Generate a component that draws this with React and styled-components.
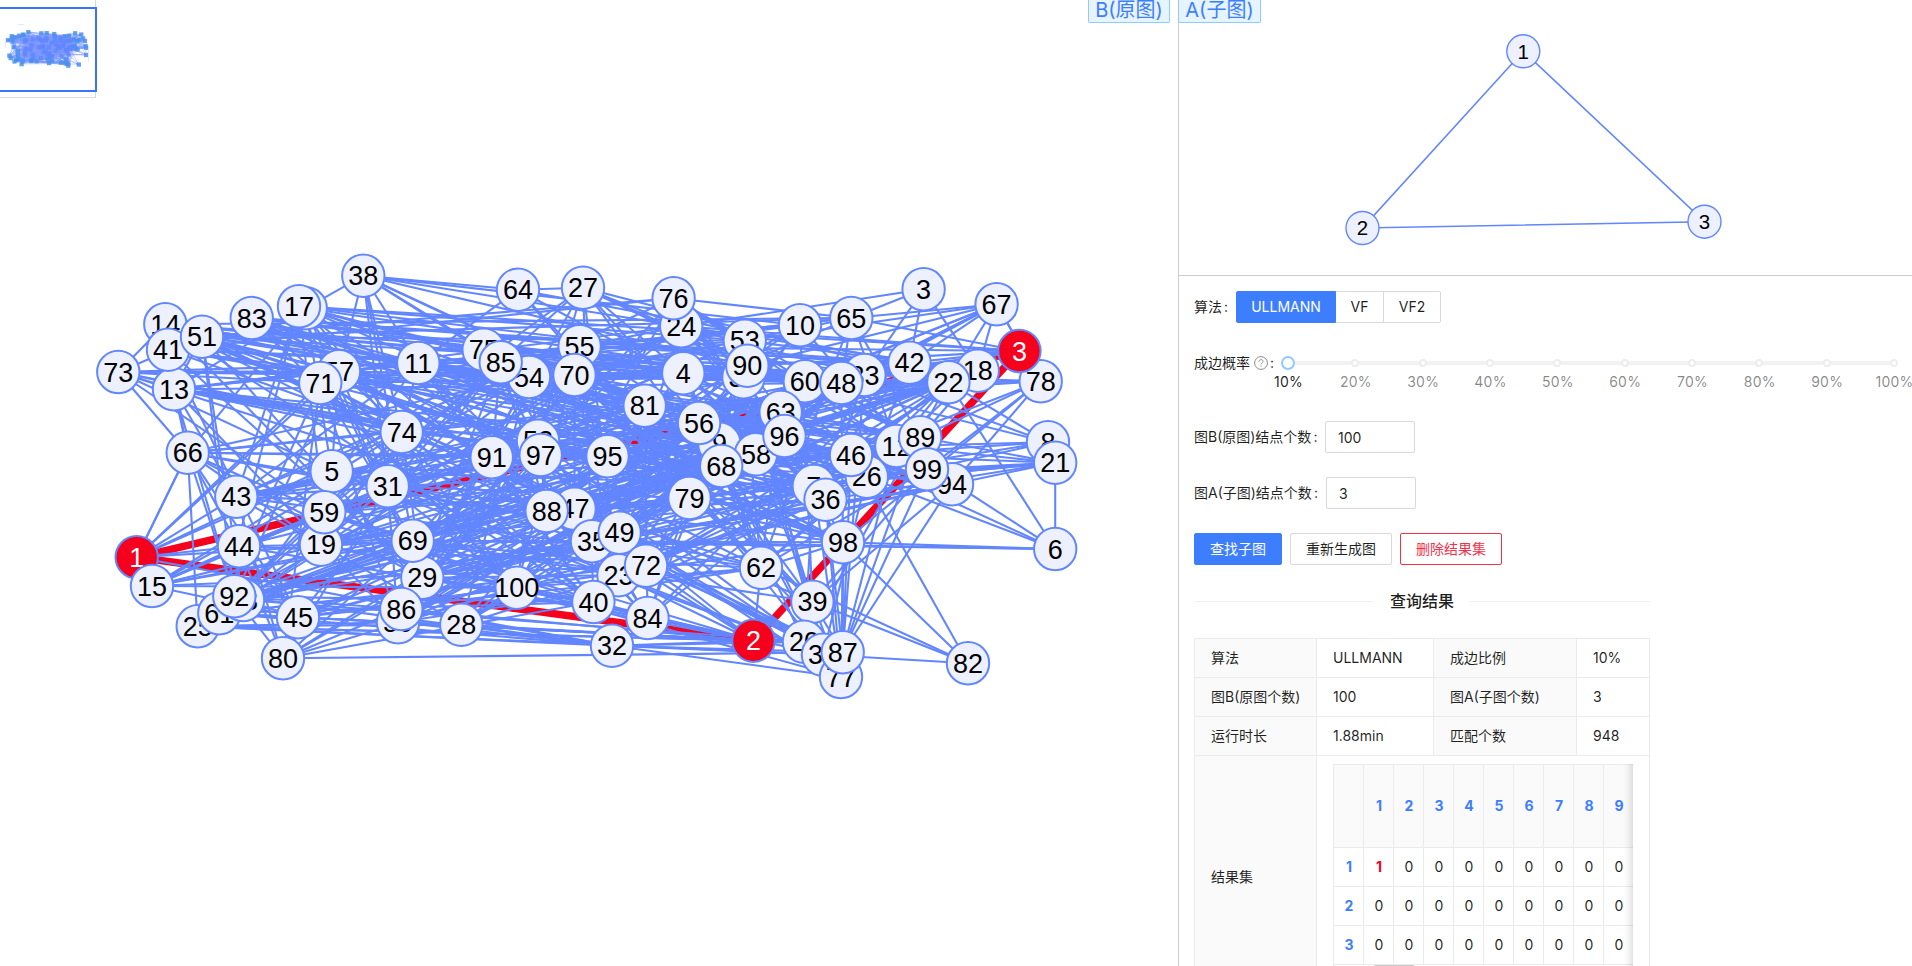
import React from 'react';
import styled, { createGlobalStyle } from 'styled-components';

const GlobalStyle = createGlobalStyle`
  * { box-sizing: border-box; }
  body {
    margin: 0;
    overflow: hidden;
    background: #fff;
    color: rgba(0, 0, 0, 0.88);
    font: 14px/22px Inter, 'Noto Sans CJK SC', sans-serif;
  }
`;

const BLUE = '#6286ff';
const PRIMARY = '#3d7eff';

/* [label, x, y], painted in order */
const NODES = [
  ['73', 118.3, 372], ['14', 165.3, 324.3], ['13', 174, 389.3], ['41', 168, 349.7], ['51', 202, 336.7],
  ['83', 251.7, 318], ['16', 305.7, 308.3], ['17', 299, 306.3], ['38', 363.3, 275.7], ['64', 518, 289.7],
  ['27', 583, 287.7], ['57', 339, 371.3], ['71', 320.3, 383], ['11', 418.3, 363], ['75', 483.7, 349.7],
  ['54', 529, 377], ['85', 500.7, 362.3], ['55', 579.6, 346.3], ['70', 574.5, 375], ['74', 401.7, 432],
  ['66', 187.7, 452.7], ['91', 491.7, 457.3], ['52', 538, 440.7], ['97', 540.7, 455], ['5', 331.7, 471.3],
  ['31', 387.7, 486.3], ['24', 681.2, 326.3], ['76', 673.6, 298.3], ['10', 800, 325.3], ['65', 851.3, 318],
  ['3', 923.6, 289.3], ['67', 996.6, 304.3], ['78', 1040.7, 381.3], ['18', 977.7, 370.7], ['42', 909.5, 362.7],
  ['22', 948.4, 382.3], ['53', 744.8, 340.7], ['30', 743.5, 377.3], ['90', 747.3, 365.7], ['4', 683.3, 373.3],
  ['33', 864.4, 375], ['60', 804.8, 381.3], ['48', 841.3, 383], ['81', 644.7, 405.7], ['9', 719.4, 443.7],
  ['56', 699.1, 423], ['63', 780.7, 412], ['58', 756, 454.3], ['96', 784.5, 436], ['68', 721.2, 466],
  ['95', 607.5, 456.3], ['12', 896.4, 446], ['89', 920.2, 437.3], ['94', 952, 484.3], ['99', 927, 469.3],
  ['8', 1048, 442.3], ['21', 1055.2, 462.7], ['26', 866.8, 476.7], ['46', 851, 455], ['7', 813.8, 486],
  ['36', 825.5, 499.7], ['79', 689.5, 498], ['47', 574.5, 508.7], ['88', 546.7, 511], ['35', 592, 541.3],
  ['49', 619.6, 532.7], ['23', 618.5, 575.3], ['72', 646, 565.7], ['62', 761, 567.7], ['98', 843, 542.3],
  ['6', 1055.2, 549], ['39', 812.4, 601.7], ['32', 612, 645.7], ['40', 593.4, 602], ['84', 647.5, 618],
  ['20', 804, 641.7], ['34', 823, 654.7], ['77', 841, 677], ['87', 842.7, 652.3], ['82', 968, 663.3],
  ['43', 236.3, 496.7], ['19', 321, 544.7], ['59', 324.3, 512.3], ['44', 239, 546.3], ['25', 197.7, 626.3],
  ['61', 219.3, 613.3], ['93', 243, 600], ['92', 234.3, 596.3], ['45', 298, 617.3], ['80', 283, 658.3],
  ['29', 422.3, 577.7], ['69', 412.7, 540.7], ['50', 398, 622.3], ['86', 401.3, 609], ['28', 461.3, 624.7],
  ['100', 516.7, 587.7],
  ['1', 136.7, 557.3, true], ['15', 152, 586], ['2', 753.5, 640.7, true], ['3', 1019.4, 351, true],
];

/* neighbours of the outer nodes */
const LINKS = {
  38: '64 16 54 11 57 74 31 69 24 10 90 81 70 85',
  3: '24 65 42 33 18',
  67: '65 78 48 42 22 33 60 90 53 56 9 18',
  6: '21 35 98 46 12 26 69 22',
  21: '99 94 26 46 12 36 88 59 89 7',
  8: '22 33 60 99 46 79 97',
  82: '98 46 39 62 34',
  80: '87 92 44 86 69 31 100 29 95 43 71 40',
  73: '51 11 13 66 71 57 54 5 97 59 14 74 4 88',
  66: '1 25 92 13 16 74 54 81 95 31 44 19 59 45 29 91 49 41',
  78: '22 48 67 99 89 46 33 81 94 98',
  77: '32 87 39 98 36 7 100 49',
  87: '98 36 94 99 89 12 39 46 72 88 62 33',
  1: '66 43 5 44 71 57 74 69 32',
  15: '44 69 100 45 59 31 88 74 72 19 54',
  2: '84 40 28 86 45 62 72 49 23 88 59 29 100 50 61',
  32: '86 28 50 92 61 2 20 34 87',
  25: '50 28 32 2 93 34 20',
};

const nodeOf = (label) => NODES.find((n) => n[0] === label);

function createRandom(seed) {
  let s = seed;
  return () => {
    s = (s * 1664525 + 1013904223) % 4294967296;
    return s / 4294967296;
  };
}

function buildEdges() {
  const edges = [];
  Object.entries(LINKS).forEach(([from, list]) => {
    list.split(' ').forEach((to) => edges.push([nodeOf(from), nodeOf(to)]));
  });
  const inner = NODES.filter((n) => !LINKS[n[0]]);
  const random = createRandom(20);
  for (let i = 0; i < inner.length; i += 1) {
    for (let j = i + 1; j < inner.length; j += 1) {
      if (random() < 0.175) edges.push([inner[i], inner[j]]);
    }
  }
  const right = NODES[NODES.length - 1];
  ['42', '65', '90', '55', '48', '17', '60', '78', '24'].forEach((t) => edges.push([right, nodeOf(t)]));
  return edges;
}

const EDGES = buildEdges();
const MATCH = NODES.filter((n) => n[3]);

const Page = styled.main`
  display: flex;
  width: 1912px;
  height: 966px;
  overflow: hidden;
`;
const SourcePane = styled.section`
  position: relative;
  width: 1178px;
  height: 966px;
  flex: none;
`;
const SidePane = styled.section`
  display: flex;
  flex-direction: column;
  flex: 1;
  border-left: 1px solid #ccc;
  min-width: 0;
`;
const PatternPane = styled.div`
  position: relative;
  height: 276px;
  flex: none;
  border-bottom: 1px solid #ccc;
`;
const Canvas = styled.svg`
  display: block;
  width: 100%;
  height: 100%;
`;
const NodeText = styled.text`
  font-family: 'Liberation Sans', sans-serif;
  font-size: ${(p) => p.$size}px;
  text-anchor: middle;
  fill: ${(p) => (p.$on ? '#fff' : '#000')};
`;
const GraphTag = styled.span`
  position: absolute;
  top: 0;
  ${(p) => (p.$right ? 'right: 8px;' : 'left: -1px;')}
  width: ${(p) => (p.$right ? 82 : 83)}px;
  height: 23px;
  border: 1px solid #91caff;
  border-top: 0;
  border-radius: 0 0 2px 2px;
  background: #e6f4ff;
  color: ${PRIMARY};
  font-size: 20px;
  line-height: 20px;
  text-align: center;
  white-space: nowrap;
`;
const Minimap = styled.div`
  position: absolute;
  left: 0;
  top: 0;
  width: 96px;
  height: 98px;
  border: solid #d9d9d9;
  border-width: 0 1px 1px 0;
`;
const Viewport = styled.div`
  position: absolute;
  left: -4px;
  top: 7px;
  width: 101px;
  height: 85px;
  border: 2px solid #3b72ff;
`;
const Controls = styled.div`
  padding: 15px 0 0 15px;
  display: flex;
  flex-direction: column;
`;
const Row = styled.div`
  display: flex;
  align-items: center;
  height: 32px;
  margin-bottom: 24px;
`;
const Label = styled.label`
  display: flex;
  align-items: center;
  white-space: nowrap;
  width: ${(p) => p.$w}px;
`;
const Colon = styled.span`
  margin-left: 2px;
`;
const RadioGroup = styled.div`
  display: flex;
`;
const RadioButton = styled.button`
  height: 32px;
  width: ${(p) => p.$w}px;
  padding: 0;
  border: 1px solid ${(p) => (p.$on ? PRIMARY : '#d9d9d9')};
  border-left-width: ${(p) => (p.$on ? 1 : 0)}px;
  border-radius: ${(p) => p.$r || 0};
  background: ${(p) => (p.$on ? PRIMARY : '#fff')};
  color: ${(p) => (p.$on ? '#fff' : 'inherit')};
  font: inherit;
`;
const SliderRow = styled(Row)`
  margin-bottom: 42px;
`;
const Slider = styled.div`
  position: relative;
  width: 606px;
  height: 32px;
  flex: none;
`;
const Rail = styled.div`
  height: 4px;
  margin-top: 14px;
  background: #f2f2f2;
`;
const Mark = styled.div`
  position: absolute;
  top: 12px;
  left: ${(p) => p.$at}%;
  width: 60px;
  margin-left: -30px;
  display: flex;
  flex-direction: column;
  align-items: center;
  color: ${(p) => (p.$on ? 'rgba(0,0,0,.88)' : 'rgba(0,0,0,.48)')};
`;
const Dot = styled.i`
  width: ${(p) => (p.$on ? 14 : 8)}px;
  height: ${(p) => (p.$on ? 14 : 8)}px;
  margin: ${(p) => (p.$on ? '-3px 0' : '0')};
  border: 2px solid ${(p) => (p.$on ? '#91caff' : '#ededed')};
  border-radius: 50%;
  background: #fff;
`;
const MarkText = styled.span`
  margin-top: 4px;
  padding-left: 1px;
  letter-spacing: 0.25px;
`;
const Input = styled.input`
  width: 90px;
  height: 32px;
  padding: 1px 12px 0;
  border: 1px solid #d9d9d9;
  border-radius: 2px;
  color: inherit;
  font: inherit;
  outline: none;
`;
const Buttons = styled(Row)`
  gap: 8px;
  margin-bottom: 23px;
`;
const Button = styled.button`
  width: ${(p) => p.$w}px;
  height: 32px;
  padding: 0;
  border: 1px solid ${(p) => ({ primary: PRIMARY, danger: '#f5314a' }[p.$kind] || '#d9d9d9')};
  border-radius: 2px;
  background: ${(p) => (p.$kind === 'primary' ? PRIMARY : '#fff')};
  color: ${(p) => ({ primary: '#fff', danger: '#f5314a' }[p.$kind] || 'inherit')};
  font: inherit;
`;
const Divider = styled.div`
  display: flex;
  align-items: center;
  gap: 16px;
  width: 456px;
  height: 26px;
  margin-bottom: 24px;
  font-size: 16px;
  font-weight: 500;
  &::before, &::after {
    content: '';
    flex: 1;
    height: 1px;
    margin-top: 1px;
    background: #f0f0f0;
  }
`;
const Descriptions = styled.div`
  display: grid;
  grid-template-columns: 122px 117px 143px 73px;
  grid-template-rows: repeat(3, 39px) 243px;
  width: 456px;
  border: solid #ebebeb;
  border-width: 1px 0 0 1px;
`;
const Cell = styled.div`
  display: flex;
  align-items: center;
  padding: 0 16px;
  border: solid #ebebeb;
  border-width: 0 1px 1px 0;
  background: ${(p) => (p.$head ? '#fafafa' : '#fff')};
  white-space: nowrap;
`;
const MatrixCell = styled(Cell)`
  grid-column: 2 / 5;
  align-items: flex-start;
  padding-top: 8px;
`;
const Scroller = styled.div`
  position: relative;
  width: 300px;
  overflow: hidden;
  &::after {
    content: '';
    position: absolute;
    inset: 0 0 0 auto;
    width: 30px;
    box-shadow: inset -10px 0 8px -8px rgba(0, 0, 0, 0.16);
  }
`;
const Matrix = styled.div`
  display: grid;
  grid-template-columns: repeat(10, 30px);
  grid-template-rows: 83px repeat(3, 39px);
  width: 300px;
  height: 208px;
  border: solid #ebebeb;
  border-width: 1px 0 0 1px;
`;
const MatrixItem = styled.div`
  display: flex;
  align-items: center;
  justify-content: center;
  padding-left: 1px;
  border: solid #ebebeb;
  border-width: 0 1px 1px 0;
  background: ${(p) => (p.$top ? '#fafafa' : '#fff')};
  color: ${(p) => p.$color || 'inherit'};
  font-weight: ${(p) => (p.$color ? 700 : 400)};
`;
const ScrollThumb = styled.div`
  position: absolute;
  left: 40px;
  top: 201px;
  width: 42px;
  height: 6px;
  border-radius: 3px;
  background: #c9c9c9;
`;
const HelpSvg = styled.svg`
  margin-left: 4px;
`;

function GraphNode({ node, r, size, stroke }) {
  const [label, x, y, on] = node;
  return (
    <g>
      <circle cx={x} cy={y} r={r} fill={on ? '#f5001d' : '#edf1ff'} stroke={BLUE} strokeWidth={stroke} />
      <NodeText x={x} y={y + size * 0.36} $size={size} $on={on}>{label}</NodeText>
    </g>
  );
}

function SourceGraph() {
  return (
    <Canvas viewBox="0 0 1178 966">
      <g stroke="#f5001d" strokeWidth="7.5">
        {[[0, 1], [0, 2], [1, 2]].map(([a, b]) => (
          <line key={`${a}${b}`} x1={MATCH[a][1]} y1={MATCH[a][2]} x2={MATCH[b][1]} y2={MATCH[b][2]} />
        ))}
      </g>
      <g stroke={BLUE} strokeWidth="2.1">
        {EDGES.map(([a, b], i) => <line key={i} x1={a[1]} y1={a[2]} x2={b[1]} y2={b[2]} />)}
      </g>
      {NODES.map((n, i) => <GraphNode key={i} node={n} r={21.2} size={27} stroke={2} />)}
    </Canvas>
  );
}

function MinimapGraph() {
  const px = (v) => v * 0.0836 - 2.2;
  const py = (v) => v * 0.0835 + 9;
  return (
    <Canvas viewBox="0 0 95 97">
      <g stroke={BLUE} strokeWidth="0.4" opacity="0.85">
        {EDGES.map(([a, b], i) => <line key={i} x1={px(a[1])} y1={py(a[2])} x2={px(b[1])} y2={py(b[2])} />)}
      </g>
      {NODES.map((n, i) => (
        <rect key={i} x={px(n[1]) - 2} y={py(n[2]) - 2} width="4.3" height="4.3" fill={n[1] > 260 && n[1] < 900 && n[2] > 330 && n[2] < 600 ? BLUE : '#4d8ff0'} opacity="0.85" />
      ))}
      <path d="M18 24.5h6M5.5 38v10M88.5 50v12" stroke="#e3e9fd" />
    </Canvas>
  );
}

const PATTERN = [['1', 344.3, 51.3], ['2', 183.5, 228], ['3', 525.5, 221.7]];

function PatternGraph() {
  return (
    <Canvas viewBox="0 0 733 275">
      <path d="M344.3 51.3 183.5 228 525.5 221.7Z" fill="none" stroke={BLUE} strokeWidth="1.6" />
      {PATTERN.map((n) => <GraphNode key={n[0]} node={n} r={16.5} size={20.5} stroke={1.4} />)}
    </Canvas>
  );
}

function HelpIcon() {
  return (
    <HelpSvg width="14" height="14" viewBox="0 0 14 14" fill="none" stroke="#8c8c8c" strokeWidth="1">
      <circle cx="7" cy="7" r="6.4" />
      <path d="M5 5.6C5 4.3 5.9 3.6 7 3.6s2 .7 2 1.8c0 1.4-2 1.4-2 3" />
      <path d="M7 9.6v1.1" />
    </HelpSvg>
  );
}

const RESULT = [
  ['算法', 'ULLMANN', '成边比例', '10%'],
  ['图B(原图个数)', '100', '图A(子图个数)', '3'],
  ['运行时长', '1.88min', '匹配个数', '948'],
];
const DIGITS = [1, 2, 3, 4, 5, 6, 7, 8, 9];

function ResultMatrix() {
  return (
    <Scroller>
      <Matrix>
        <MatrixItem $top />
        {DIGITS.map((d) => <MatrixItem key={d} $top $color={PRIMARY}>{d}</MatrixItem>)}
        {[1, 2, 3].map((r) => (
          <React.Fragment key={r}>
            <MatrixItem $color={PRIMARY}>{r}</MatrixItem>
            {DIGITS.map((d) => {
              const hit = r === 1 && d === 1;
              return <MatrixItem key={d} $color={hit ? '#f5001d' : undefined}>{hit ? 1 : 0}</MatrixItem>;
            })}
          </React.Fragment>
        ))}
      </Matrix>
      <ScrollThumb />
    </Scroller>
  );
}

export default function App() {
  return (
    <Page>
      <GlobalStyle />
      <SourcePane>
        <SourceGraph />
        <Minimap><MinimapGraph /><Viewport /></Minimap>
        <GraphTag $right>B(原图)</GraphTag>
      </SourcePane>
      <SidePane>
        <PatternPane>
          <PatternGraph />
          <GraphTag>A(子图)</GraphTag>
        </PatternPane>
        <Controls>
          <Row>
            <Label $w={42}>算法<Colon>:</Colon></Label>
            <RadioGroup>
              <RadioButton $on $w={100} $r="2px 0 0 2px">ULLMANN</RadioButton>
              <RadioButton $w={48}>VF</RadioButton>
              <RadioButton $w={57} $r="0 2px 2px 0">VF2</RadioButton>
            </RadioGroup>
          </Row>
          <SliderRow>
            <Label $w={94}>成边概率<HelpIcon /><Colon>:</Colon></Label>
            <Slider>
              <Rail />
              {[10, 20, 30, 40, 50, 60, 70, 80, 90, 100].map((v, i) => (
                <Mark key={v} $at={(i * 100) / 9} $on={i === 0}>
                  <Dot $on={i === 0} />
                  <MarkText>{v}%</MarkText>
                </Mark>
              ))}
            </Slider>
          </SliderRow>
          <Row>
            <Label $w={131}>图B(原图)结点个数<Colon>:</Colon></Label>
            <Input defaultValue="100" />
          </Row>
          <Row>
            <Label $w={132}>图A(子图)结点个数<Colon>:</Colon></Label>
            <Input defaultValue="3" />
          </Row>
          <Buttons>
            <Button $kind="primary" $w={88}>查找子图</Button>
            <Button $w={102}>重新生成图</Button>
            <Button $kind="danger" $w={102}>删除结果集</Button>
          </Buttons>
          <Divider>查询结果</Divider>
          <Descriptions>
            {RESULT.map((row) => row.map((text, i) => <Cell key={text} $head={i % 2 === 0}>{text}</Cell>))}
            <Cell $head>结果集</Cell>
            <MatrixCell><ResultMatrix /></MatrixCell>
          </Descriptions>
        </Controls>
      </SidePane>
    </Page>
  );
}
